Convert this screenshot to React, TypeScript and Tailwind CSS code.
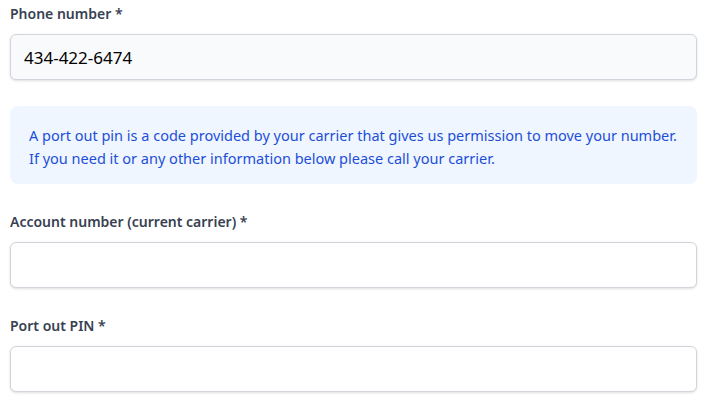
import React from "react";

const font = { fontFamily: '"Noto Sans", "Open Sans", sans-serif' };

function Field({ label, value, filled }: { label: string; value?: string; filled?: boolean }) {
  return (
    <div className="flex flex-col gap-[10px]">
      <label className="text-[14px] leading-[20px] font-semibold text-[#374151]">{label}</label>
      <input
        readOnly
        value={value ?? ""}
        className={`h-[46px] w-full rounded-md border border-[#d1d5db] px-[13px] text-[17px] text-black shadow-sm outline-none ${filled ? "bg-[#f9fafb]" : "bg-white"}`}
        style={font}
      />
    </div>
  );
}

export default function App() {
  return (
    <div className="w-[713px] h-[404px] bg-white pl-[10px] pr-[16px] pt-[4px] flex flex-col" style={font}>
      <Field label="Phone number *" value="434-422-6474" filled />
      <div className="mt-[26px] rounded-lg bg-[#eff6ff] px-[19px] pt-[18px] pb-[14px] text-[14.5px] leading-[23px] text-[#1d4ed8]">
        <p>A port out pin is a code provided by your carrier that gives us permission to move your number.</p>
        <p>If you need it or any other information below please call your carrier.</p>
      </div>
      <div className="mt-[28px]">
        <Field label="Account number (current carrier) *" />
      </div>
      <div className="mt-[28px]">
        <Field label="Port out PIN *" />
      </div>
    </div>
  );
}
